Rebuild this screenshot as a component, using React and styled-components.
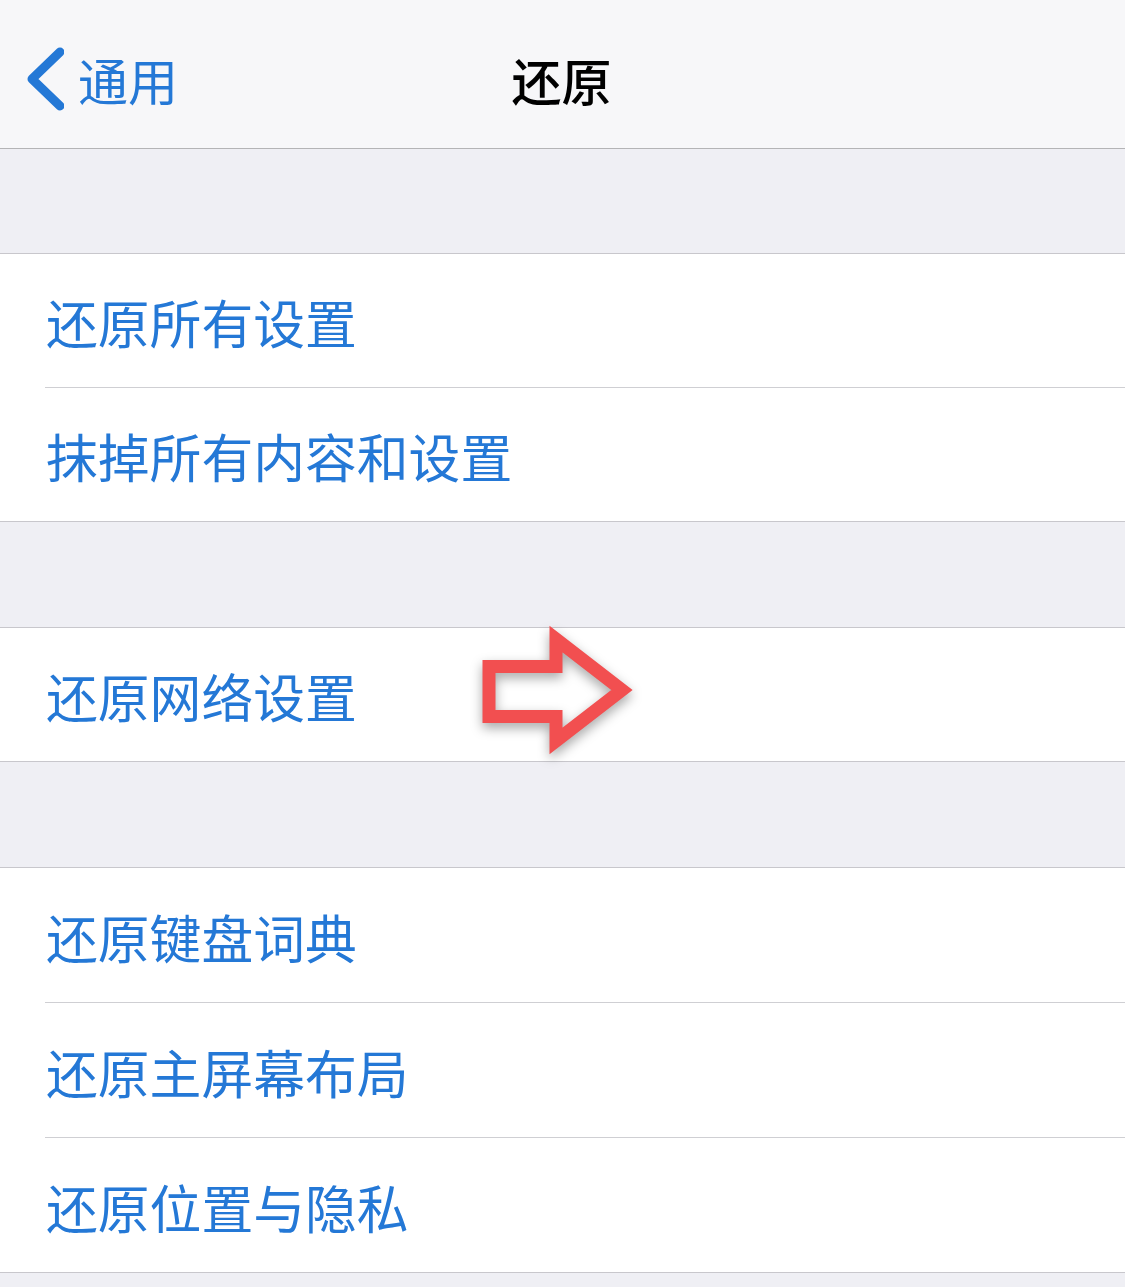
import React from "react";
import styled, { createGlobalStyle } from "styled-components";

const GlobalStyle = createGlobalStyle`
  html, body {
    margin: 0;
    padding: 0;
    background: #efeff4;
  }
  body {
    font-family: "Noto Sans CJK SC", "Noto Sans", sans-serif;
  }
`;

const Page = styled.div`
  min-height: 100vh;
  background-color: #efeff4;
`;

const NavBar = styled.header`
  align-items: center;
  background-color: #f7f7f9;
  border-bottom: 1px solid #b4b4b6;
  box-sizing: border-box;
  display: grid;
  grid-template-columns: 1fr auto 1fr;
  height: 149px;
  padding-top: 10px;
`;

const BackButton = styled.div`
  align-items: center;
  color: #2478d6;
  display: flex;
  font-size: 50px;
  gap: 14px;
  line-height: 1;
  padding-left: 24px;
`;

const Title = styled.h1`
  color: #000;
  font-size: 50px;
  font-weight: 500;
  line-height: 1;
  margin: 0 0 0 -2px;
`;

const Spacer = styled.div`
  height: ${p => p.$h}px;
`;

const Group = styled.section`
  background-color: #fff;
  border-bottom: 1px solid #c8c7cc;
  border-top: 1px solid #c8c7cc;
`;

const Row = styled.div`
  padding-left: 45px;
  position: relative;
`;

const RowInner = styled.div`
  align-items: center;
  border-bottom: ${p => (p.$last ? "none" : "1px solid #cfcfd3")};
  box-sizing: border-box;
  color: #2478d6;
  display: flex;
  font-size: 51.8px;
  height: ${p => (p.$last ? p.$h - 1 : p.$h)}px;
  padding-left: 1px;
  padding-top: 2px;
`;

const Pointer = styled.svg`
  filter: drop-shadow(0 5px 6px rgba(0, 0, 0, 0.35));
  left: 470px;
  position: absolute;
  top: -8px;
`;

const groups = [
  { gap: 104, h: 134, items: ["还原所有设置", "抹掉所有内容和设置"] },
  { gap: 105, h: 134, items: ["还原网络设置"] },
  { gap: 105, h: 135, items: ["还原键盘词典", "还原主屏幕布局", "还原位置与隐私"] }
];

const Chevron = () => (
  <svg width="40" height="68" viewBox="0 0 40 68">
    <polyline
      points="36,7 8,34 36,61"
      fill="none"
      stroke="#2478d6"
      strokeWidth="9"
      strokeLinecap="round"
      strokeLinejoin="round"
    />
  </svg>
);

const RedArrow = () => (
  <Pointer width="175" height="145" viewBox="0 0 175 145">
    <polygon
      points="19,46.5 86,46.5 86,19 152,70 86,121 86,96.5 19,96.5"
      fill="none"
      stroke="#f24f50"
      strokeWidth="13"
      strokeLinejoin="miter"
    />
  </Pointer>
);

const App = () => (
  <Page>
    <GlobalStyle />
    <NavBar>
      <BackButton>
        <Chevron />
        <span>通用</span>
      </BackButton>
      <Title>还原</Title>
      <div />
    </NavBar>
    {groups.map(({ gap, h, items }, gi) => (
      <React.Fragment key={gi}>
        <Spacer $h={gap} />
        <Group>
          {items.map((label, i) => (
            <Row key={label}>
              <RowInner $h={h} $last={i === items.length - 1}>
                {label}
              </RowInner>
              {label === "还原网络设置" && <RedArrow />}
            </Row>
          ))}
        </Group>
      </React.Fragment>
    ))}
  </Page>
);

export default App;
